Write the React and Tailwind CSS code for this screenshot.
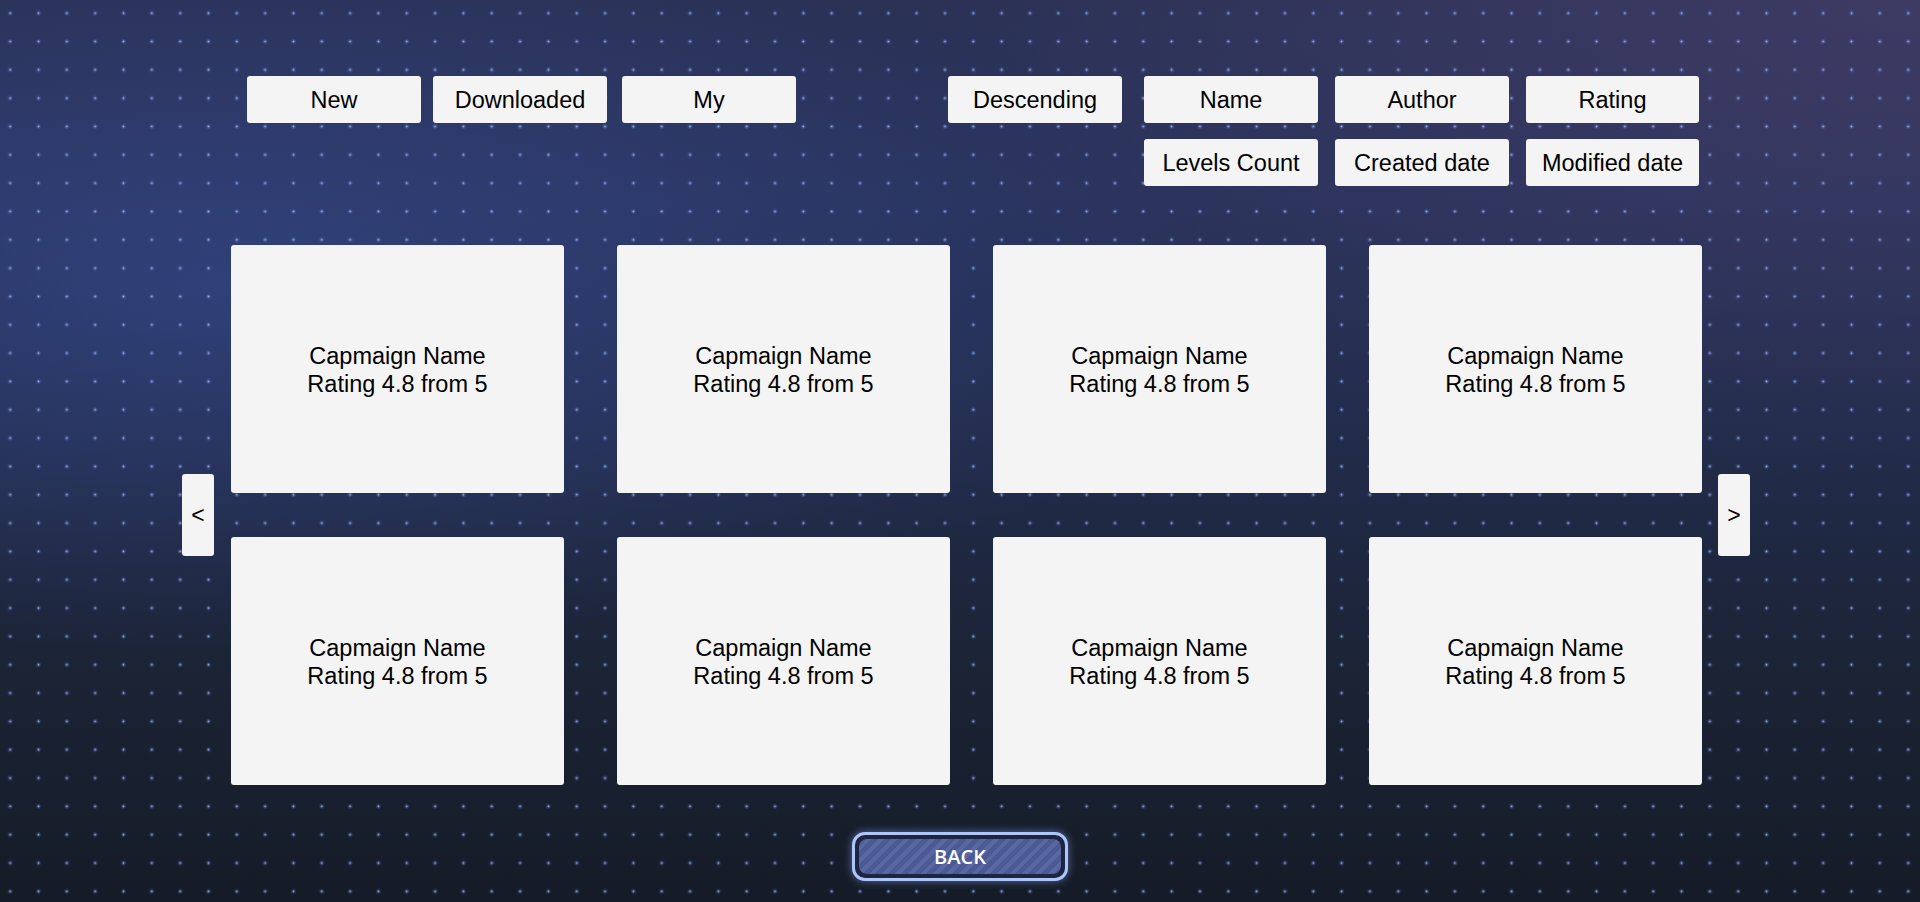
const filters = [
  { label: "New", cls: "" },
  { label: "Downloaded", cls: "ml-[12px]" },
  { label: "My", cls: "ml-[15px]" },
];

const sorts = ["Name", "Author", "Rating", "Levels Count", "Created date", "Modified date"];

// column offsets differ a little between the cards
const cardMargins = ["", "ml-[53px]", "ml-[43px]", "ml-[43px]"];

const rows = [
  [1, 2, 3, 4],
  [5, 6, 7, 8],
];

const TabButton = ({ children, className = "" }) => (
  <button
    type="button"
    className={`h-[47px] w-[174px] rounded-[3px] bg-[#f4f4f4] pt-[2px] text-[23.5px] text-black cursor-pointer ${className}`}
  >
    {children}
  </button>
);

const CampaignCard = ({ className = "" }) => (
  <div
    className={`flex h-[248px] w-[333px] flex-col items-center justify-center rounded-[3px] bg-[#f4f4f4] pt-[2px] text-[23.5px] leading-[28px] text-black ${className}`}
  >
    <span>Capmaign Name</span>
    <span>Rating 4.8 from 5</span>
  </div>
);

const PageArrow = ({ children }) => (
  <button
    type="button"
    className="flex h-[82px] w-[32px] items-center justify-center rounded-[3px] bg-[#f4f4f4] text-[23px] text-black cursor-pointer"
  >
    {children}
  </button>
);

const App = () => {
  return (
    <div className="h-[902px] w-full overflow-hidden bg-[image:radial-gradient(ellipse_at_12%_32%,rgba(62,86,170,0.42),transparent_42%),radial-gradient(ellipse_at_100%_0%,rgba(78,66,112,0.55),transparent_38%),linear-gradient(180deg,#2a3155_0%,#28325a_22%,#222c4b_48%,#1b2335_75%,#151b27_100%)] font-['Liberation_Sans',Arial,sans-serif]">
      <div className="flex h-full w-full flex-col bg-[image:radial-gradient(circle,rgba(175,200,255,0.85)_0,rgba(130,160,245,0.35)_1.3px,rgba(110,140,230,0.08)_2.4px,transparent_3.2px)] bg-[size:28.33px_28.33px] bg-[position:-4px_-1px] pt-[76px]">
        {/* filter + sort bar */}
        <div className="flex items-start pl-[247px]">
          {filters.map((f) => (
            <TabButton key={f.label} className={f.cls}>
              {f.label}
            </TabButton>
          ))}
          <TabButton className="ml-[152px] w-[173px]">Descending</TabButton>
          <div className="ml-[22px] grid grid-cols-[174px_174px_173px] gap-x-[17px] gap-y-[16px]">
            {sorts.map((s) => (
              <TabButton key={s} className="w-full">
                {s}
              </TabButton>
            ))}
          </div>
        </div>

        {/* campaigns */}
        <div className="mt-[59px] flex items-center pl-[182px]">
          <PageArrow>&lt;</PageArrow>
          <div className="ml-[17px] flex flex-col gap-y-[44px]">
            {rows.map((row, r) => (
              <div key={r} className="flex">
                {row.map((id, i) => (
                  <CampaignCard key={id} className={cardMargins[i]} />
                ))}
              </div>
            ))}
          </div>
          <div className="ml-[16px]">
            <PageArrow>&gt;</PageArrow>
          </div>
        </div>

        {/* back */}
        <div className="mt-[47px] flex justify-center">
          <button
            type="button"
            className="h-[49px] w-[216px] rounded-[13px] border-[3px] border-[#aec5f8] bg-[#1c2640] p-[4px] shadow-[0_0_8px_rgba(140,170,255,0.55)] cursor-pointer"
          >
            <div className="flex h-full w-full items-center justify-center rounded-[8px] bg-[image:repeating-linear-gradient(135deg,#4b5995_0px,#4b5995_5px,#5967a3_5px,#5967a3_9px)]">
              <span className="font-['Open_Sans',sans-serif] text-[20px] font-semibold text-white">
                BACK
              </span>
            </div>
          </button>
        </div>
      </div>
    </div>
  );
};

export default App;
